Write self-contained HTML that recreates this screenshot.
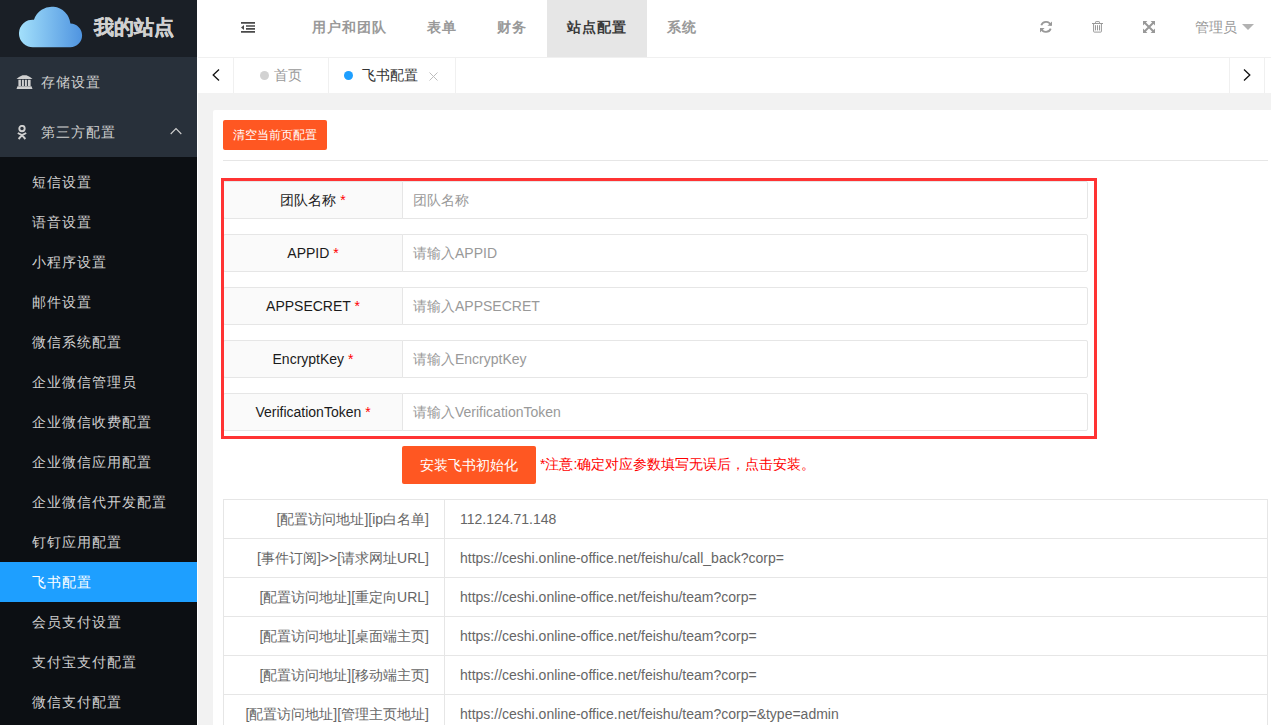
<!DOCTYPE html>
<html><head><meta charset="utf-8">
<style>
*{margin:0;padding:0;box-sizing:border-box;}
html,body{width:1271px;height:725px;overflow:hidden;background:#f2f2f2;font-family:"Liberation Sans",sans-serif;font-size:14px;color:#666;}
.abs{position:absolute;}
#side{position:absolute;left:0;top:0;width:197px;height:725px;background:#0c0f13;}
#logo{position:absolute;left:0;top:0;width:197px;height:57px;background:#1a1f26;}
#logo .t{position:absolute;left:94px;top:12px;font-size:20px;font-weight:bold;color:#d0d0d0;-webkit-text-stroke:0.4px #d0d0d0;line-height:30px;white-space:nowrap;}
.mi{position:absolute;left:0;width:197px;height:50px;background:#28303a;color:#d0d0d0;line-height:50px;font-size:14px;}
.mi span{position:absolute;left:41px;letter-spacing:1px;}
.sub{position:absolute;left:0;width:197px;height:40px;line-height:40px;color:#d0d0d0;font-size:14px;}
.sub span{position:absolute;left:32px;letter-spacing:1px;}
.sub.on{background:#1e9fff;color:#fff;}
#sline{position:absolute;left:197px;top:0;width:1px;height:725px;background:#fff;}
#hdr{position:absolute;left:198px;top:0;width:1073px;height:57px;background:#fff;}
#hb{position:absolute;left:198px;top:57px;width:1073px;height:1px;background:#f0f0f0;}
.nv{position:absolute;top:0;height:57px;line-height:54px;font-size:14px;font-weight:bold;color:#999;white-space:nowrap;letter-spacing:1px;}
#tabs{position:absolute;left:198px;top:58px;width:1073px;height:35px;background:#fff;}
.vl{position:absolute;top:58px;width:1px;height:35px;background:#f0f0f0;}
#card{position:absolute;left:213px;top:110px;width:1070px;height:640px;background:#fff;border-radius:2px;}
.btn{position:absolute;background:#ff5722;color:#fff;border-radius:2px;text-align:center;white-space:nowrap;}
.lab{position:absolute;left:223px;width:180px;height:38px;background:#fafafa;border:1px solid #e6e6e6;border-radius:2px 0 0 2px;color:#1a1a1a;text-align:center;line-height:36px;font-size:14px;}
.lab i{font-style:normal;color:#ff0000;}
.inp{position:absolute;left:402px;width:686px;height:38px;background:#fff;border:1px solid #e6e6e6;border-radius:0 2px 2px 0;color:#999;line-height:36px;padding-left:10px;font-size:14px;}
#redbox{position:absolute;left:221px;top:178px;width:876px;height:261px;border:3px solid #ff3333;}
table{position:absolute;left:223px;top:499px;border-collapse:collapse;width:1045px;}
td{border:1px solid #e6e6e6;height:39px;padding:0 15px;line-height:37px;color:#666;font-size:14px;white-space:nowrap;}
td.l{width:221px;text-align:right;}
</style></head><body>
<div id="side">
  <div id="logo">
    <svg class="abs" style="left:0;top:0" width="100" height="57" viewBox="0 0 100 57">
      <defs><linearGradient id="cg" x1="0" x2="1" y1="0" y2="0"><stop offset="0" stop-color="#a3e0fb"/><stop offset="1" stop-color="#4f94e0"/></linearGradient></defs>
      <path fill="url(#cg)" d="M33.8 47.2 A13.8 13.8 0 1 1 34 19.7 A18.7 18.7 0 0 1 70.4 23.6 A11.8 11.8 0 0 1 70.2 47.2 Z"/>
    </svg>
    <div class="t">我的站点</div>
  </div>
  <div class="mi" style="top:57px">
    <svg class="abs" style="left:16px;top:17px" width="17" height="16" viewBox="0 0 17 16"><path fill="#d0d0d0" d="M0.5 5 L3 3 L6.5 1.2 H10.5 L14 3 L16.5 5 Z M2.4 5.8 H4.9 V12 H2.4Z M5.9 5.8 H7.9 V12 H5.9Z M8.9 5.8 H10.9 V12 H8.9Z M11.9 5.8 H14.6 V12 H11.9Z M1.5 12.3 H15.5 L16.5 15 H0.5Z"/></svg>
    <span>存储设置</span>
  </div>
  <div class="mi" style="top:107px">
    <svg class="abs" style="left:17px;top:18px" width="10" height="15" viewBox="0 0 10 15"><circle cx="5" cy="3.6" r="2.7" fill="none" stroke="#d0d0d0" stroke-width="1.9"/><path d="M0.8 8 L5 10.2 L9.2 8 M5 10.2 L1.6 14 M5 10.2 L8.4 14" fill="none" stroke="#d0d0d0" stroke-width="1.9" stroke-linejoin="round"/></svg>
    <span>第三方配置</span>
    <svg class="abs" style="left:170px;top:20px" width="12" height="8" viewBox="0 0 12 8"><path d="M0.7 7 L6 1.5 L11.3 7" fill="none" stroke="#d0d0d0" stroke-width="1.1"/></svg>
  </div>
  <div class="sub" style="top:162px"><span>短信设置</span></div>
  <div class="sub" style="top:202px"><span>语音设置</span></div>
  <div class="sub" style="top:242px"><span>小程序设置</span></div>
  <div class="sub" style="top:282px"><span>邮件设置</span></div>
  <div class="sub" style="top:322px"><span>微信系统配置</span></div>
  <div class="sub" style="top:362px"><span>企业微信管理员</span></div>
  <div class="sub" style="top:402px"><span>企业微信收费配置</span></div>
  <div class="sub" style="top:442px"><span>企业微信应用配置</span></div>
  <div class="sub" style="top:482px"><span>企业微信代开发配置</span></div>
  <div class="sub" style="top:522px"><span>钉钉应用配置</span></div>
  <div class="sub on" style="top:562px"><span>飞书配置</span></div>
  <div class="sub" style="top:602px"><span>会员支付设置</span></div>
  <div class="sub" style="top:642px"><span>支付宝支付配置</span></div>
  <div class="sub" style="top:682px"><span>微信支付配置</span></div>
</div>
<div id="sline"></div>
<div id="hdr">
  <svg class="abs" style="left:43px;top:22px" width="14" height="11" viewBox="0 0 14 11"><path fill="#4a4a4a" d="M0 0.1 H14 V1.8 H0Z M5 3.2 H14 V4.8 H5Z M5 6.1 H14 V7.8 H5Z M0 9.1 H14 V10.8 H0Z M0 5.4 L3 2.9 V7.9Z"/></svg>
  <div class="nv" style="left:114px">用户和团队</div>
  <div class="nv" style="left:229px">表单</div>
  <div class="nv" style="left:299px">财务</div>
  <div class="abs" style="left:349px;top:0;width:100px;height:57px;background:#e6e6e6"></div>
  <div class="nv" style="left:369px;color:#3a3a3a">站点配置</div>
  <div class="nv" style="left:469px">系统</div>
  <svg class="abs" style="left:842px;top:21px" width="12" height="12" viewBox="0 0 12 12"><path fill="none" stroke="#999" stroke-width="1.8" d="M1.3 4.2 A5 5 0 0 1 10.8 4.6 M10.7 7.6 A5 5 0 0 1 1.2 7.2"/><path fill="#999" d="M12 0.4 V4.8 H7.4Z M0 11.5 V7 H4.6Z"/></svg>
  <svg class="abs" style="left:894px;top:21px" width="11" height="12" viewBox="0 0 11 12"><path fill="none" stroke="#999" stroke-width="1" d="M0 2.5 H11 M3.5 2.5 V1.2 Q3.5 0.6 4.1 0.6 H6.9 Q7.5 0.6 7.5 1.2 V2.5 M1.6 2.5 V10.5 Q1.6 11.1 2.2 11.1 H8.8 Q9.4 11.1 9.4 10.5 V2.5"/><path fill="none" stroke="#999" stroke-width="1" stroke-linecap="round" d="M3.5 4.6 V9 M5.5 4.6 V9 M7.5 4.6 V9"/></svg>
  <svg class="abs" style="left:945px;top:21px" width="12" height="12" viewBox="0 0 12 12"><path fill="none" stroke="#999" stroke-width="2" d="M1.5 1.5 L10.5 10.5 M10.5 1.5 L1.5 10.5"/><path fill="#999" d="M0 0 H4.4 L0 4.4Z M12 0 V4.4 L7.6 0Z M0 12 V7.6 L4.4 12Z M12 12 H7.6 L12 7.6Z"/></svg>
  <div class="nv" style="left:997px;font-weight:normal;color:#999;letter-spacing:0">管理员</div>
  <svg class="abs" style="left:1044px;top:24px" width="12" height="6" viewBox="0 0 12 6"><path fill="#b2b2b2" d="M0 0 H12 L6 6Z"/></svg>
</div>
<div id="hb"></div>
<div id="tabs">
  <svg class="abs" style="left:14px;top:11px" width="8" height="12" viewBox="0 0 8 12"><path d="M7 0.5 L1.2 6 L7 11.5" fill="none" stroke="#111" stroke-width="1.3"/></svg>
  <div class="abs" style="left:62px;top:13px;width:9px;height:9px;border-radius:50%;background:#d2d2d2"></div>
  <div class="abs" style="left:76px;top:0;line-height:35px;color:#999">首页</div>
  <div class="abs" style="left:146px;top:13px;width:9px;height:9px;border-radius:50%;background:#1e9fff"></div>
  <div class="abs" style="left:164px;top:0;line-height:35px;color:#333">飞书配置</div>
  <svg class="abs" style="left:231px;top:14px" width="9" height="9" viewBox="0 0 9 9"><path d="M0.5 0.5 L8.5 8.5 M8.5 0.5 L0.5 8.5" stroke="#bdbdbd" stroke-width="1"/></svg>
  <svg class="abs" style="left:1045px;top:11px" width="8" height="12" viewBox="0 0 8 12"><path d="M1 0.5 L6.8 6 L1 11.5" fill="none" stroke="#111" stroke-width="1.3"/></svg>
</div>
<div class="vl" style="left:233px"></div>
<div class="vl" style="left:328px"></div>
<div class="vl" style="left:455px"></div>
<div class="vl" style="left:1229px"></div>
<div class="vl" style="left:1264px"></div>
<div id="card"></div>
<div class="btn" style="left:223px;top:120px;width:104px;height:30px;line-height:30px;font-size:12px">清空当前页配置</div>
<div class="abs" style="left:223px;top:160px;width:1045px;height:1px;background:#e6e6e6"></div>

<div class="lab" style="top:181px">团队名称 <i>*</i></div><div class="inp" style="top:181px">团队名称</div>
<div class="lab" style="top:234px">APPID <i>*</i></div><div class="inp" style="top:234px">请输入APPID</div>
<div class="lab" style="top:287px">APPSECRET <i>*</i></div><div class="inp" style="top:287px">请输入APPSECRET</div>
<div class="lab" style="top:340px">EncryptKey <i>*</i></div><div class="inp" style="top:340px">请输入EncryptKey</div>
<div class="lab" style="top:393px">VerificationToken <i>*</i></div><div class="inp" style="top:393px">请输入VerificationToken</div>
<div id="redbox"></div>

<div class="btn" style="left:402px;top:446px;width:134px;height:38px;line-height:38px;font-size:14px">安装飞书初始化</div>
<div class="abs" style="left:540px;top:454px;line-height:20px;color:#ff0000;font-size:14px;white-space:nowrap">*注意:确定对应参数填写无误后，点击安装。</div>

<table>
<tr><td class="l">[配置访问地址][ip白名单]</td><td>112.124.71.148</td></tr>
<tr><td class="l">[事件订阅]&gt;&gt;[请求网址URL]</td><td>https://ceshi.online-office.net/feishu/call_back?corp=</td></tr>
<tr><td class="l">[配置访问地址][重定向URL]</td><td>https://ceshi.online-office.net/feishu/team?corp=</td></tr>
<tr><td class="l">[配置访问地址][桌面端主页]</td><td>https://ceshi.online-office.net/feishu/team?corp=</td></tr>
<tr><td class="l">[配置访问地址][移动端主页]</td><td>https://ceshi.online-office.net/feishu/team?corp=</td></tr>
<tr><td class="l">[配置访问地址][管理主页地址]</td><td>https://ceshi.online-office.net/feishu/team?corp=&amp;type=admin</td></tr>
</table>
</body></html>
